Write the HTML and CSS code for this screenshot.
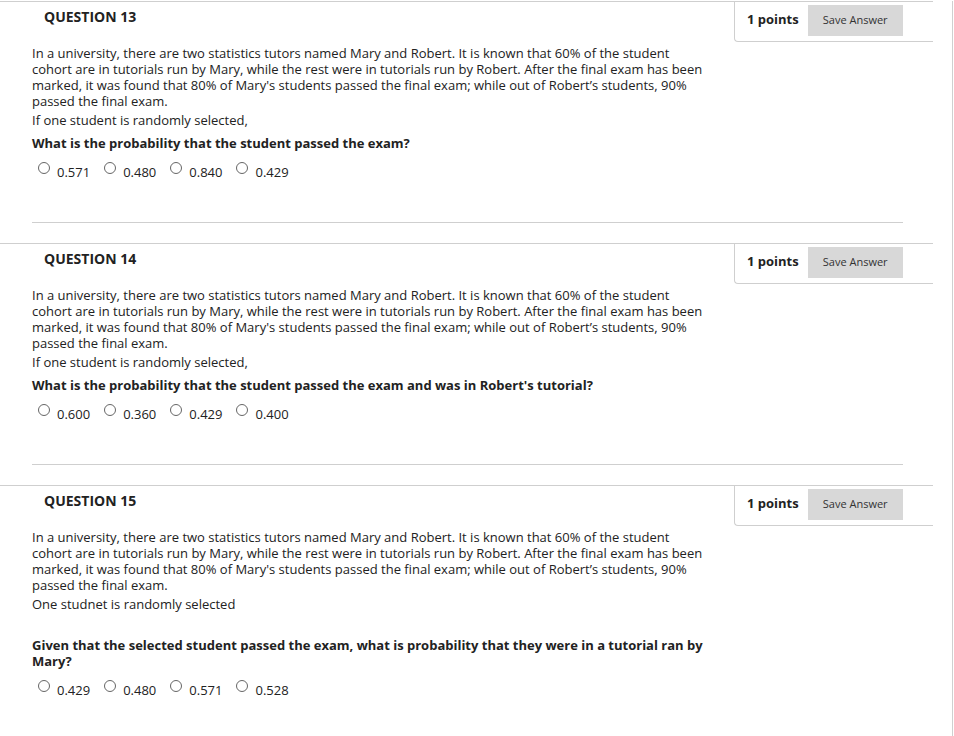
FILE: index.html
```html
<!DOCTYPE html>
<html>
<head>
<meta charset="utf-8">
<link rel="stylesheet" href="styles.css">
</head>
<body>
<div class="page">
  <section class="question">
    <div class="qhead">
      <h3 class="qtitle">QUESTION 13</h3>
      <div class="points"><span class="pts">1 points</span><button class="save">Save Answer</button></div>
    </div>
    <div class="qbody">
      <p class="text">In a university, there are two statistics tutors named Mary and Robert. It is known that 60% of the student cohort are in tutorials run by Mary, while the rest were in tutorials run by Robert. After the final exam has been marked, it was found that 80% of Mary's students passed the final exam; while out of Robert’s students, 90% passed the final exam.</p>
      <p class="text sub">If one student is randomly selected,</p>
      <p class="text ask">What is the probability that the student passed the exam?</p>
      <div class="options">
        <label class="opt"><span class="radio"></span><span class="val">0.571</span></label>
        <label class="opt"><span class="radio"></span><span class="val">0.480</span></label>
        <label class="opt"><span class="radio"></span><span class="val">0.840</span></label>
        <label class="opt"><span class="radio"></span><span class="val">0.429</span></label>
      </div>
    </div>
    <hr class="sep">
  </section>

  <section class="question">
    <div class="qhead">
      <h3 class="qtitle">QUESTION 14</h3>
      <div class="points"><span class="pts">1 points</span><button class="save">Save Answer</button></div>
    </div>
    <div class="qbody">
      <p class="text">In a university, there are two statistics tutors named Mary and Robert. It is known that 60% of the student cohort are in tutorials run by Mary, while the rest were in tutorials run by Robert. After the final exam has been marked, it was found that 80% of Mary's students passed the final exam; while out of Robert’s students, 90% passed the final exam.</p>
      <p class="text sub">If one student is randomly selected,</p>
      <p class="text ask">What is the probability that the student passed the exam and was in Robert's tutorial?</p>
      <div class="options">
        <label class="opt"><span class="radio"></span><span class="val">0.600</span></label>
        <label class="opt"><span class="radio"></span><span class="val">0.360</span></label>
        <label class="opt"><span class="radio"></span><span class="val">0.429</span></label>
        <label class="opt"><span class="radio"></span><span class="val">0.400</span></label>
      </div>
    </div>
    <hr class="sep">
  </section>

  <section class="question">
    <div class="qhead">
      <h3 class="qtitle">QUESTION 15</h3>
      <div class="points"><span class="pts">1 points</span><button class="save">Save Answer</button></div>
    </div>
    <div class="qbody">
      <p class="text">In a university, there are two statistics tutors named Mary and Robert. It is known that 60% of the student cohort are in tutorials run by Mary, while the rest were in tutorials run by Robert. After the final exam has been marked, it was found that 80% of Mary's students passed the final exam; while out of Robert’s students, 90% passed the final exam.</p>
      <p class="text sub">One studnet is randomly selected</p>
      <p class="text ask gap">Given that the selected student passed the exam, what is probability that they were in a tutorial ran by Mary?</p>
      <div class="options">
        <label class="opt"><span class="radio"></span><span class="val">0.429</span></label>
        <label class="opt"><span class="radio"></span><span class="val">0.480</span></label>
        <label class="opt"><span class="radio"></span><span class="val">0.571</span></label>
        <label class="opt"><span class="radio"></span><span class="val">0.528</span></label>
      </div>
    </div>
  </section>
</div>
</body>
</html>
```

FILE: styles.css
```css
html, body {
  margin: 0;
  padding: 0;
  background: #fff;
}
body {
  font-family: "Open Sans", "Liberation Sans", sans-serif;
  color: #222;
}
.page {
  width: 953px;
  min-height: 736px;
  border-right: 1px solid #d0d0d0;
  box-sizing: border-box;
}
.question {
  width: 933px;
  border-top: 1px solid #cfcfcf;
  margin-top: 1px;
}
.question + .question {
  margin-top: 20px;
}
.qhead {
  display: flex;
  justify-content: space-between;
  align-items: flex-start;
}
.qtitle {
  margin: 0;
  padding: 5px 0 0 44px;
  font-size: 14px;
  line-height: 20px;
  font-weight: 700;
  color: #222;
}
.points {
  width: 199px;
  height: 40px;
  box-sizing: border-box;
  border-left: 1px solid #cfcfcf;
  border-bottom: 1px solid #cfcfcf;
  border-bottom-left-radius: 4px;
  display: flex;
  align-items: flex-start;
  padding: 3px 0 0 12px;
  gap: 9px;
}
.pts {
  font-size: 13px;
  font-weight: 700;
  line-height: 29px;
  color: #222;
}
.save {
  font-family: "Open Sans", "Liberation Sans", sans-serif;
  font-size: 11px;
  color: #333;
  background: #d8d8d8;
  border: none;
  width: 95px;
  height: 31px;
  padding: 0 0 2px;
  margin: 0;
}
.qbody {
  padding: 3px 0 0 32px;
}
.text {
  margin: 0;
  width: 674px;
  font-size: 13px;
  line-height: 16px;
  color: #222;
}
.sub {
  margin-top: 3px;
}
.ask {
  margin-top: 7px;
  font-weight: 700;
}
.ask.gap {
  margin-top: 25px;
}
.options {
  display: flex;
  gap: 14px;
  margin-top: 10px;
  padding-left: 6px;
  height: 18px;
}
.opt {
  display: inline-flex;
  align-items: flex-start;
  gap: 7px;
}
.radio {
  width: 12px;
  height: 12px;
  box-sizing: border-box;
  border: 1px solid #666;
  border-radius: 50%;
  margin-top: 1px;
  background: #fff;
}
.val {
  font-size: 13px;
  line-height: 16px;
  padding-top: 3px;
  color: #222;
}
.sep {
  margin: 43px 30px 0 32px;
  border: none;
  border-top: 1px solid #cfcfcf;
  height: 0;
}
```
